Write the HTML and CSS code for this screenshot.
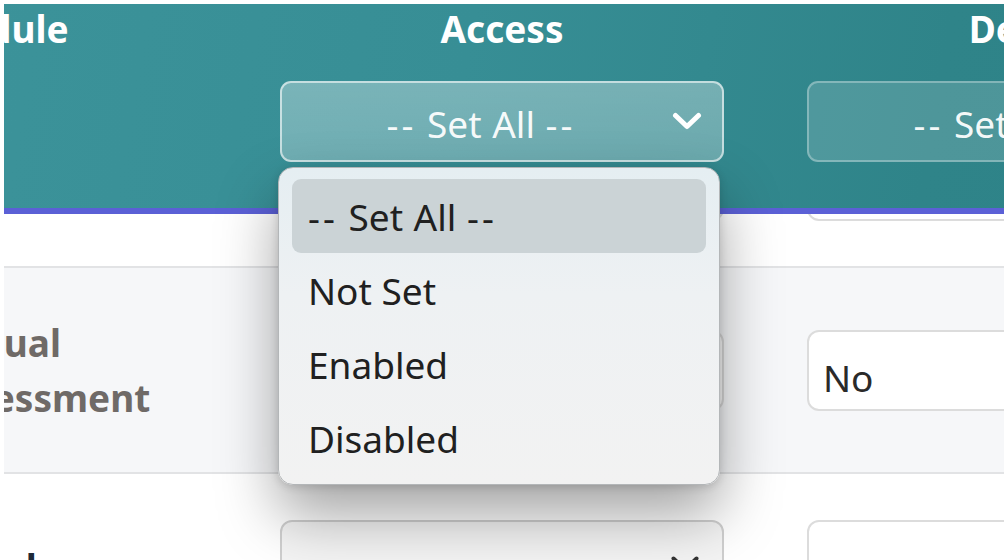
FILE: index.html
```html
<!DOCTYPE html>
<html lang="en">
<head>
<meta charset="utf-8">
<title>Access settings</title>
<link rel="stylesheet" href="styles.css">
</head>
<body>
<div class="viewport">
  <div class="table">
    <div class="thead">
      <div class="hcell hcell-left"><div class="htitle">Module</div></div>
      <div class="hcell">
        <div class="htitle">Access</div>
        <div class="hsel hsel-active">
          <span class="setall"><span class="dash">--</span> Set All <span class="dash">--</span></span>
          <svg class="chev" viewBox="0 0 30 19" width="30" height="19"><polyline points="3.5,3.5 15,14.5 26.5,3.5" fill="none" stroke="#fff" stroke-width="5" stroke-linecap="round" stroke-linejoin="round"/></svg>
        </div>
      </div>
      <div class="hcell">
        <div class="htitle">Delete</div>
        <div class="hsel hsel-dim"><span class="setall"><span class="dash">--</span> Set All <span class="dash">--</span></span></div>
      </div>
    </div>

    <div class="row row1">
      <div class="label"></div>
      <div class="sel sel-stub"></div>
      <div class="sel sel-stub"></div>
    </div>

    <div class="row row2">
      <div class="label label-muted">Annual Assessment</div>
      <div class="sel"></div>
      <div class="sel">No</div>
    </div>

    <div class="row row3">
      <div class="label label-dark label-single">Social</div>
      <div class="sel sel-grey sel-low">
        <span>Enabled</span>
        <svg class="chev chev-dark" viewBox="0 0 30 19" width="30" height="19"><polyline points="3.5,3.5 15,14.5 26.5,3.5" fill="none" stroke="#333" stroke-width="4" stroke-linecap="round" stroke-linejoin="round"/></svg>
      </div>
      <div class="sel sel-low">No</div>
    </div>
  </div>

  <div class="menu">
    <div class="opt opt-hl"><span class="setall"><span class="dash">--</span> Set All <span class="dash">--</span></span></div>
    <div class="opt">Not Set</div>
    <div class="opt">Enabled</div>
    <div class="opt">Disabled</div>
  </div>
</div>
</body>
</html>
```

FILE: styles.css
```css
* { box-sizing: border-box; }

html, body {
  margin: 0;
  padding: 0;
  background: #ffffff;
  font-family: "Noto Sans", "Open Sans", sans-serif;
}

.viewport {
  position: relative;
  margin: 4px 0 0 4px;
  width: 1000px;
  height: 556px;
  overflow: hidden;
  background: #ffffff;
}

.table {
  margin-left: -74px;
  width: 1330px;
}

.thead,
.row {
  display: grid;
  grid-template-columns: 267px 444px 444px;
  column-gap: 83px;
}

.thead {
  position: relative;
  z-index: 2;
  background: linear-gradient(100deg, #3c939a 0%, #378e95 40%, #2f8489 75%, #2d8287 100%);
  border-bottom: 6px solid #5b60d6;
  padding: 3px 0 46px;
}

.hcell {
  display: flex;
  flex-direction: column;
  align-items: center;
  gap: 30px;
}

.hcell-left { align-items: flex-start; }

.htitle {
  color: #ffffff;
  font-weight: 700;
  font-size: 37px;
  line-height: 44px;
  height: 44px;
  white-space: nowrap;
}

.hsel {
  position: relative;
  width: 444px;
  height: 81px;
  border-radius: 11px;
  display: flex;
  align-items: center;
  justify-content: center;
  padding: 4px 60px 0 18px;
  font-size: 37px;
  color: rgba(255, 255, 255, 0.95);
  white-space: nowrap;
}

.hsel-active {
  background: linear-gradient(180deg, rgba(255,255,255,0.33), rgba(255,255,255,0.28));
  border: 2px solid rgba(255, 255, 255, 0.6);
}

.hsel-dim {
  background: rgba(255, 255, 255, 0.15);
  border: 2px solid rgba(255, 255, 255, 0.3);
}

.setall { word-spacing: 1px; }
.dash { letter-spacing: 3px; }

.chev {
  position: absolute;
  right: 20px;
  top: 29px;
}

.row {
  border-bottom: 2px solid #e2e3e5;
  align-items: center;
}

.row1 { grid-template-rows: 52px; background: #ffffff; }
.row2 { grid-template-rows: 204px; background: #f6f7f9; }
.row3 { grid-template-rows: 173px; background: #ffffff; }

.label {
  font-size: 37px;
  font-weight: 700;
  line-height: 55px;
}

.label-single {
  white-space: nowrap;
  margin-top: 14px;
}

.label-muted { color: #6f6a67; }
.label-dark { color: #1e2a38; }

.sel {
  position: relative;
  height: 81px;
  border-radius: 12px;
  border: 2px solid #dcdcdc;
  background: #ffffff;
  display: flex;
  align-items: center;
  padding: 14px 0 0 14px;
  font-size: 37px;
  color: #2a2a2a;
  white-space: nowrap;
}

.sel-stub {
  align-self: end;
  margin-bottom: 45px;
}

.sel-low { padding-top: 26px; }

.sel-grey { background: #f4f4f4; border-color: #cfcfcf; }

.chev-dark { right: 22px; top: 33px; }

.menu {
  position: absolute;
  left: 274px;
  top: 163px;
  width: 442px;
  height: 318px;
  padding: 11px 13px 0;
  border: 1px solid #b3b6b8;
  border-radius: 15px;
  background: linear-gradient(180deg, #e5eef2 0%, #eef1f3 40%, #f2f2f2 100%);
  box-shadow: 0 30px 60px rgba(0, 0, 0, 0.36), 0 2px 8px rgba(0, 0, 0, 0.14);
  z-index: 5;
}

.opt {
  height: 74px;
  display: flex;
  align-items: center;
  padding-left: 16px;
  font-size: 37px;
  color: #202020;
  border-radius: 9px;
  white-space: nowrap;
}

.opt-hl { background: #cbd3d6; }
```
